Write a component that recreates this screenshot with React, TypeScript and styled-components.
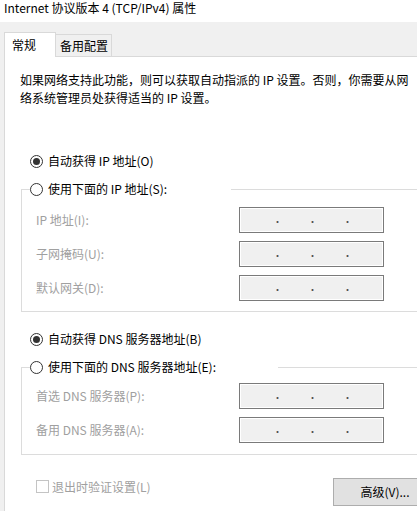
import { Fragment, ReactNode } from 'react';
import styled, { createGlobalStyle, css } from 'styled-components';

const GlobalStyle = createGlobalStyle`
  html, body {
    margin: 0;
    padding: 0;
    background: #f0f0f0;
  }
  body {
    font-family: "Noto Sans CJK SC", "Noto Sans", sans-serif;
    font-size: 12px;
    color: #000;
  }
`;

const Viewport = styled.div`
  width: 417px;
  height: 511px;
  overflow: hidden;
  background: #f0f0f0;
`;

const Dialog = styled.div`
  width: 460px;
  display: flex;
  flex-direction: column;
`;

const TitleBar = styled.div`
  height: 22px;
  background: #fff;
  padding-left: 4px;
  line-height: 16px;
  white-space: nowrap;
`;

const Body = styled.div`
  padding: 10px 0 0 4px;
`;

const TabStrip = styled.div`
  display: flex;
  align-items: flex-end;
  height: 24px;
`;

const Tab = styled.div<{ $active?: boolean }>`
  position: relative;
  box-sizing: border-box;
  border: 1px solid #d9d9d9;
  border-bottom: none;
  line-height: 16px;
  white-space: nowrap;
  ${({ $active }) =>
    $active
      ? css`
          z-index: 1;
          width: 52px;
          height: 25px;
          margin-bottom: -1px;
          padding: 4px 0 0 7px;
          background: #fff;
        `
      : css`
          width: 57px;
          height: 22px;
          margin-left: -1px;
          padding: 3px 0 0 4px;
          background: #f0f0f0;
        `}
`;

const Panel = styled.div`
  background: #fff;
  border-top: 1px solid #d9d9d9;
  border-left: 1px solid #d9d9d9;
  padding: 14px 0 12px 0;
  display: flex;
  flex-direction: column;
`;

const Description = styled.p`
  margin: 0 0 0 15px;
  line-height: 18px;
  white-space: nowrap;
`;

const RadioRow = styled.label<{ $top?: number }>`
  display: flex;
  align-items: center;
  gap: 5px;
  height: 16px;
  line-height: 16px;
  margin: ${({ $top = 0 }) => $top}px 0 0 25px;
  white-space: nowrap;
`;

const RadioMark = styled.span<{ $checked?: boolean }>`
  box-sizing: border-box;
  width: 13px;
  height: 13px;
  border: 1px solid #333;
  border-radius: 50%;
  background: #fff;
  display: flex;
  align-items: center;
  justify-content: center;
  flex: none;
  &::after {
    content: '';
    width: 7px;
    height: 7px;
    border-radius: 50%;
    background: ${({ $checked }) => ($checked ? '#333' : 'transparent')};
  }
`;

const Group = styled.fieldset`
  margin: 12px 0 0 16px;
  padding: 0;
  border: 1px solid #dcdcdc;
  border-right: none;
  min-inline-size: 0;
`;

const GroupLegend = styled.legend<{ $width: number }>`
  box-sizing: border-box;
  width: ${({ $width }) => $width}px;
  height: 16px;
  margin-left: 8px;
  padding: 0;
  & > ${RadioRow} {
    margin: 0;
  }
`;

const FieldGrid = styled.div<{ $pt: number; $pb: number }>`
  display: grid;
  grid-template-columns: 203px 145px;
  row-gap: 8px;
  align-items: center;
  padding: ${({ $pt, $pb }) => `${$pt}px 0 ${$pb}px 14px`};
`;

const FieldLabel = styled.span`
  color: #a0a0a0;
  white-space: nowrap;
  line-height: 16px;
`;

const IpBox = styled.div`
  box-sizing: border-box;
  height: 26px;
  width: 145px;
  border: 1px solid #7a7a7a;
  box-shadow: inset 0 0 0 1px #fff;
  background: #f0f0f0;
  display: flex;
  align-items: center;
  gap: 34px;
  padding: 3px 0 0 37px;
`;

const Dot = styled.span`
  width: 1px;
  height: 2px;
  background: #555;
  box-shadow: -1px 0 0 #d8b08a, 1px 0 0 #8fb2d6;
`;

const BottomRow = styled.div`
  display: grid;
  grid-template-columns: 297px 104px;
  align-items: start;
  margin-top: 23px;
  padding-left: 31px;
`;

const CheckRow = styled.label`
  display: flex;
  align-items: center;
  gap: 3px;
  height: 13px;
  line-height: 13px;
  margin-top: 2px;
  color: #a0a0a0;
  white-space: nowrap;
`;

const CheckMark = styled.span`
  box-sizing: border-box;
  width: 13px;
  height: 13px;
  border: 1px solid #c4c4c4;
  background: #fff;
  flex: none;
`;

const PushButton = styled.button`
  box-sizing: border-box;
  height: 28px;
  width: 104px;
  border: 1px solid #adadad;
  background: #e1e1e1;
  font: inherit;
  color: #000;
  line-height: 26px;
  padding: 0;
  text-align: center;
`;

const IpField = () => (
  <IpBox>
    <Dot />
    <Dot />
    <Dot />
  </IpBox>
);

const Radio = ({ checked, children }: { checked?: boolean; children: ReactNode }) => (
  <>
    <RadioMark $checked={checked} />
    <span>{children}</span>
  </>
);

const ipRows = ['IP 地址(I):', '子网掩码(U):', '默认网关(D):'];
const dnsRows = ['首选 DNS 服务器(P):', '备用 DNS 服务器(A):'];

export default function App() {
  return (
    <Viewport>
      <GlobalStyle />
      <Dialog>
        <TitleBar>Internet 协议版本 4 (TCP/IPv4) 属性</TitleBar>
        <Body>
          <TabStrip>
            <Tab $active>常规</Tab>
            <Tab>备用配置</Tab>
          </TabStrip>
          <Panel>
            <Description>
              如果网络支持此功能，则可以获取自动指派的 IP 设置。否则，你需要从网
              <br />
              络系统管理员处获得适当的 IP 设置。
            </Description>

            <RadioRow $top={46}>
              <Radio checked>自动获得 IP 地址(O)</Radio>
            </RadioRow>
            <Group>
              <GroupLegend $width={201}>
                <RadioRow>
                  <Radio>使用下面的 IP 地址(S):</Radio>
                </RadioRow>
              </GroupLegend>
              <FieldGrid $pt={10} $pb={10}>
                {ipRows.map((label) => (
                  <Fragment key={label}>
                    <FieldLabel>{label}</FieldLabel>
                    <IpField />
                  </Fragment>
                ))}
              </FieldGrid>
            </Group>

            <RadioRow $top={19}>
              <Radio checked>自动获得 DNS 服务器地址(B)</Radio>
            </RadioRow>
            <Group>
              <GroupLegend $width={248}>
                <RadioRow>
                  <Radio>使用下面的 DNS 服务器地址(E):</Radio>
                </RadioRow>
              </GroupLegend>
              <FieldGrid $pt={8} $pb={11}>
                {dnsRows.map((label) => (
                  <Fragment key={label}>
                    <FieldLabel>{label}</FieldLabel>
                    <IpField />
                  </Fragment>
                ))}
              </FieldGrid>
            </Group>

            <BottomRow>
              <CheckRow>
                <CheckMark />
                退出时验证设置(L)
              </CheckRow>
              <PushButton>高级(V)...</PushButton>
            </BottomRow>
          </Panel>
        </Body>
      </Dialog>
    </Viewport>
  );
}
